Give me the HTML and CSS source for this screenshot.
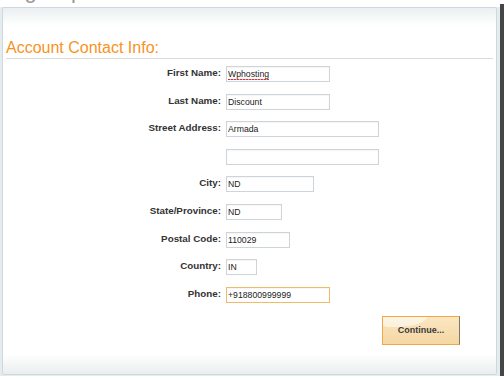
FILE: index.html
```html
<!DOCTYPE html>
<html lang="en">
  <head>
    <meta charset="UTF-8" />
    <meta name="viewport" content="width=device-width, initial-scale=1.0" />
    <title>Account Contact Info</title>
    <link rel="stylesheet" href="styles.css">
  </head>
  <body>
    <div class="frame">
      <div class="title-strip">
        <h1 class="page-title">Sign Up</h1>
      </div>
      <div class="panel">
        <h2 class="heading">Account Contact Info:</h2>
        <form class="contact-form">
          <label for="first">First Name:</label>
          <input type="text" id="first" class="field w-name misspelt" value="Wphosting" />
          <label for="last">Last Name:</label>
          <input type="text" id="last" class="field w-name" value="Discount" />
          <label for="street1">Street Address:</label>
          <input type="text" id="street1" class="field w-wide" value="Armada" />
          <span></span>
          <input type="text" id="street2" class="field w-wide" value="" />
          <label for="city">City:</label>
          <input type="text" id="city" class="field w-city" value="ND" />
          <label for="state">State/Province:</label>
          <input type="text" id="state" class="field w-state" value="ND" />
          <label for="zip">Postal Code:</label>
          <input type="text" id="zip" class="field w-zip" value="110029" />
          <label for="country">Country:</label>
          <input type="text" id="country" class="field w-country" value="IN" />
          <label for="phone">Phone:</label>
          <input type="text" id="phone" class="field w-name active" value="+918800999999" />
        </form>
        <div class="actions">
          <button type="button" class="continue">Continue...</button>
        </div>
      </div>
    </div>
  </body>
</html>
```

FILE: styles.css
```css
body {
  margin: 0;
  background: #fff;
  font-family: "Liberation Sans", Arial, sans-serif;
}
.frame {
  width: 500px;
  height: 376px;
  background: #e4ecef;
  box-shadow: 4px 4px 0 #464646; /* dark edge of the window */
}
.title-strip {
  height: 7px;
  overflow: hidden;
  background: #fff;
}
.page-title {
  margin: -20px 0 0;
  padding-left: 5px;
  font-size: 22px;
  line-height: 22px;
  font-weight: normal;
  color: #9a9a9a;
}
.panel {
  box-sizing: border-box;
  width: 495px;
  height: 368px;
  margin-left: 2px;
  padding-top: 31px;
  border: 1px solid #cfd8dc;
  border-radius: 2px;
  background: linear-gradient(#ebeff1, #fff 18px, #fff calc(100% - 20px), #eaedee);
}
.heading {
  margin: 0 3px;
  padding-bottom: 1px;
  border-bottom: 1px solid #dcdcdc;
  font-size: 16px;
  line-height: 18px;
  font-weight: normal;
  color: #f7931e;
}
.contact-form {
  display: grid;
  grid-template-columns: 218px 1fr;
  grid-auto-rows: 16px;
  column-gap: 5px;
  row-gap: 11.6px;
  margin-top: 7px;
}
.contact-form label {
  align-self: start;
  text-align: right;
  font-size: 9.8px;
  line-height: 14px;
  font-weight: bold;
  color: #333;
}
.field {
  box-sizing: border-box;
  height: 16px;
  margin: 0;
  padding: 0 1px;
  border: 1px solid #cdd5da;
  box-shadow: inset 0 1px 1px rgba(0, 0, 0, 0.04);
  font-family: "Liberation Sans", Arial, sans-serif;
  font-size: 8.7px;
  color: #222;
  background: #fff;
}
/* spell-check squiggle under the first name */
.misspelt {
  background: repeating-linear-gradient(90deg, #e03030 0 2px, #f4a0a0 2px 3px) 1px 12px / 41px 1px no-repeat, #fff;
}
.active {
  border-color: #efbb6a;
}
.w-name {
  width: 104px;
}
.w-wide {
  width: 153px;
}
.w-city {
  width: 88px;
}
.w-state {
  width: 56px;
}
.w-zip {
  width: 64px;
}
.w-country {
  width: 31px;
}
.actions {
  display: flex;
  justify-content: flex-end;
  margin-top: 13px;
  padding-right: 36px;
}
.continue {
  box-sizing: border-box;
  width: 78px;
  height: 29px;
  padding: 0;
  border: 1px solid #f2a648;
  border-right-color: #857765; /* darker edge on the right */
  background: radial-gradient(ellipse 70% 60% at 15% 0%, rgba(255, 255, 255, 0.55) 0 60%, transparent 62%),
    linear-gradient(#fbe6c2, #f4d7a3);
  font-family: "Liberation Sans", Arial, sans-serif;
  font-size: 9px;
  font-weight: bold;
  color: #3a3a3a;
}
```
